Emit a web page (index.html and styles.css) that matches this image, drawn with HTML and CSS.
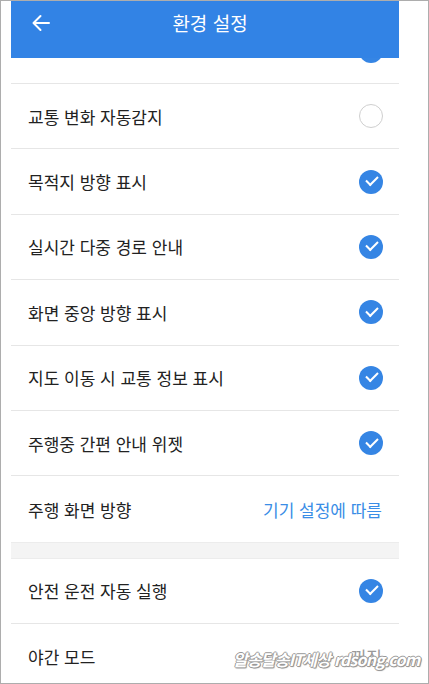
FILE: index.html
```html
<!DOCTYPE html>
<html lang="ko">
<head>
    <meta charset="UTF-8">
    <title>환경 설정</title>
    <link rel="stylesheet" href="styles.css">
</head>
<body>
<div class="frame">
    <div class="screen">
        <div class="header">
            <svg class="back" width="20" height="18" viewBox="0 0 20 18">
                <path d="M18 9H3M9.5 2L2.5 9l7 7" fill="none" stroke="#fff" stroke-width="2" stroke-linecap="round" stroke-linejoin="round"/>
            </svg>
            <div class="title">환경 설정</div>
        </div>
        <div class="body">
            <div class="list">
                <div class="row"><span class="label"></span><span class="check on"></span></div>
                <div class="row"><span class="label">교통 변화 자동감지</span><span class="check"></span></div>
                <div class="row"><span class="label">목적지 방향 표시</span><span class="check on"></span></div>
                <div class="row"><span class="label">실시간 다중 경로 안내</span><span class="check on"></span></div>
                <div class="row"><span class="label">화면 중앙 방향 표시</span><span class="check on"></span></div>
                <div class="row"><span class="label">지도 이동 시 교통 정보 표시</span><span class="check on"></span></div>
                <div class="row"><span class="label">주행중 간편 안내 위젯</span><span class="check on"></span></div>
                <div class="row last"><span class="label">주행 화면 방향</span><span class="value">기기 설정에 따름</span></div>
                <div class="gap"></div>
                <div class="row"><span class="label">안전 운전 자동 실행</span><span class="check on"></span></div>
                <div class="row"><span class="label">야간 모드</span><span class="value off">꺼짐</span></div>
            </div>
        </div>
    </div>
    <div class="mark">알송달송IT세상 rdsong.com</div>
</div>
</body>
</html>
```

FILE: styles.css
```css
*{margin: 0;padding: 0;box-sizing: border-box;}

body{
    background: #fff;
    font-family: "Noto Sans CJK KR", "Noto Sans", sans-serif;
}
.frame{
    position: relative;
    width: 429px;
    height: 684px;
    border: 1px solid #adadad;
    padding-left: 10px;
    overflow: hidden;
}
.screen{
    width: 388px;
    height: 682px;
    display: flex;
    flex-direction: column;
}
.header{
    position: relative;
    z-index: 1;
    height: 57px;
    flex-shrink: 0;
    background: #3283e5;
    display: flex;
    align-items: flex-start;
    padding: 11px 0 0 20px;
}
.header .back{
    margin-top: 2px;
}
.header .title{
    flex: 1;
    text-align: center;
    color: #fff;
    font-size: 19px;
    line-height: 22px;
    padding-right: 30px;
}
.body{
    flex: 1;
    overflow: hidden;
}
.list{
    margin-top: -39.4px;
}
.row{
    height: 65.4px;
    border-bottom: 1px solid #e6e6e6;
    display: flex;
    align-items: center;
    justify-content: space-between;
    padding: 0 16px 0 17px;
}
.row.last{
    border-bottom: 0;
}
.row .label{
    font-size: 17px;
    color: #222;
}
.row .value{
    font-size: 17px;
    color: #3a8de6;
    margin-right: 1px;
}
.row .value.off{
    color: #999;
}
.check{
    width: 24px;
    height: 24px;
    border-radius: 50%;
    border: 1.5px solid #cfcfcf;
    position: relative;
}
.check.on{
    border: 0;
    background: #3585e4;
}
.check.on::after{
    content: "";
    position: absolute;
    left: 7px;
    top: 6.5px;
    width: 10px;
    height: 5px;
    border-left: 2px solid #fff;
    border-bottom: 2px solid #fff;
    transform: rotate(-45deg);
}
.gap{
    height: 17px;
    background: #f4f4f4;
    border-top: 1px solid #ececec;
    border-bottom: 1px solid #ececec;
}
.mark{
    position: absolute;
    left: 232px;
    top: 646px;
    white-space: nowrap;
    font-size: 16px;
    font-weight: bold;
    font-style: italic;
    color: #fff;
    letter-spacing: -0.8px;
    text-shadow: 1px 0 0 #999, -1px 0 0 #999, 0 1px 0 #999, 0 -1px 0 #999, 1px 1px 1px #888;
}
```
